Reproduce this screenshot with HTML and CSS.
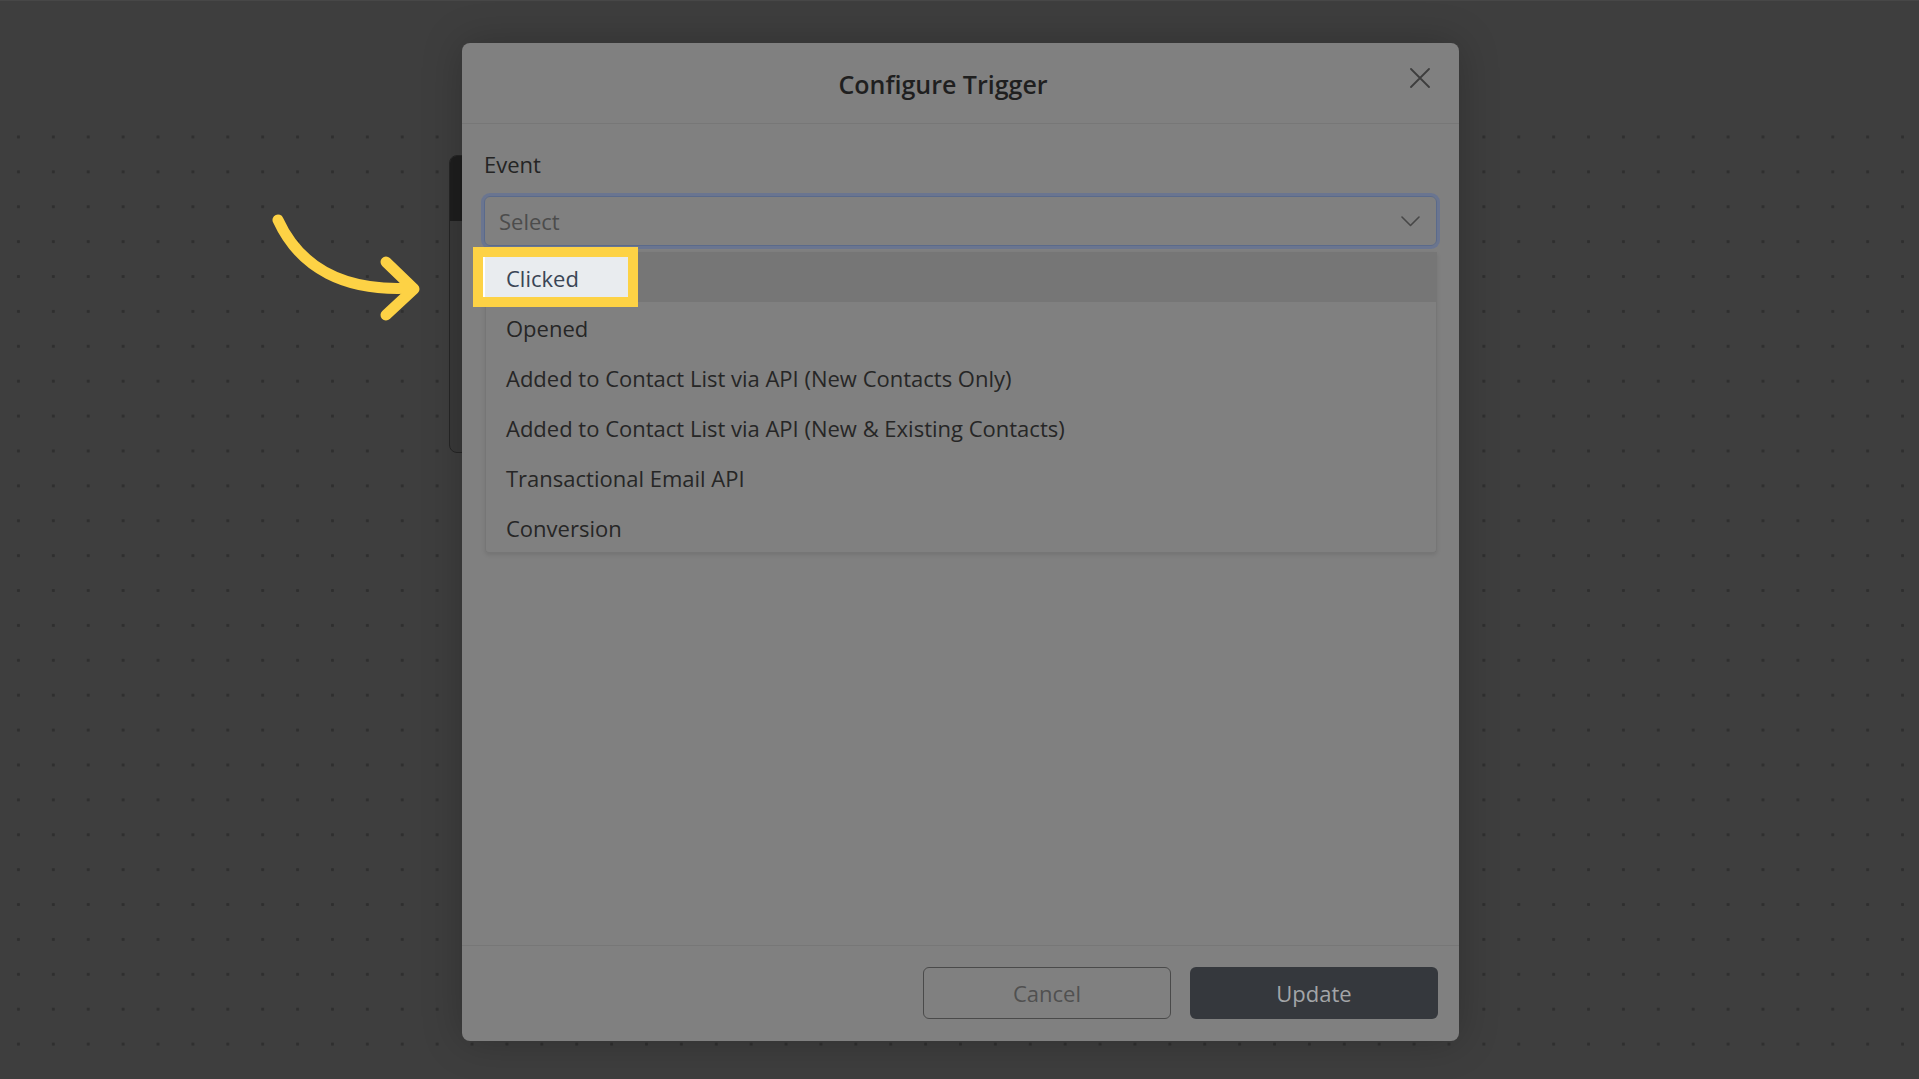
FILE: index.html
```html
<!DOCTYPE html>
<html lang="en">
<head>
    <meta charset="UTF-8">
    <meta name="viewport" content="width=device-width, initial-scale=1.0">
    <title>Configure Trigger</title>
    <link rel="stylesheet" href="styles.css">
</head>
<body>
    <div class="app">
        <div class="topbar"></div>
        <div class="board">
            <!-- workflow node sitting behind the dialog -->
            <div class="node">
                <div class="node-head"></div>
            </div>
        </div>
    </div>

    <div class="modal-layer">
        <div class="modal">
            <div class="modal-header">
                <div class="modal-title">Configure Trigger</div>
                <button class="close-btn" aria-label="Close">
                    <svg width="20" height="20" viewBox="0 0 20 20">
                        <path d="M1 1 L19 19 M19 1 L1 19" stroke="#3d3d3d" stroke-width="1.8" stroke-linecap="round"/>
                    </svg>
                </button>
            </div>

            <div class="modal-body">
                <div class="field-label">Event</div>
                <div class="select">
                    <span class="placeholder">Select</span>
                    <svg width="19" height="11" viewBox="0 0 19 11">
                        <path d="M1 1 L9.5 9.5 L18 1" fill="none" stroke="#474747" stroke-width="1.6" stroke-linecap="round" stroke-linejoin="round"/>
                    </svg>
                </div>
                <ul class="options">
                    <li class="option is-active">Clicked</li>
                    <li class="option">Opened</li>
                    <li class="option">Added to Contact List via API (New Contacts Only)</li>
                    <li class="option">Added to Contact List via API (New &amp; Existing Contacts)</li>
                    <li class="option">Transactional Email API</li>
                    <li class="option">Conversion</li>
                </ul>
            </div>

            <div class="modal-footer">
                <button class="btn btn-outline">Cancel</button>
                <button class="btn btn-dark">Update</button>
            </div>
        </div>
    </div>

    <!-- step callout -->
    <div class="spotlight">Clicked</div>
    <svg class="pointer" width="180" height="130" viewBox="0 0 180 130">
        <path d="M18 20 C40 68, 85 92, 152 88" fill="none" stroke="#fdd245" stroke-width="11" stroke-linecap="round"/>
        <path d="M126 62 L154 89 L126 115" fill="none" stroke="#fdd245" stroke-width="11" stroke-linecap="round" stroke-linejoin="round"/>
    </svg>
</body>
</html>
```

FILE: styles.css
```css
* {
    box-sizing: border-box;
}

html, body {
    margin: 0;
    height: 100%;
}

body {
    font-family: "Open Sans", "Noto Sans", Arial, sans-serif;
    background: #3e3e3e;
    overflow: hidden;
    position: relative;
}

.app {
    height: 1079px;
    display: flex;
    flex-direction: column;
    border-top: 1px solid #474747;
}

.topbar {
    height: 119px;
}

.board {
    flex: 1;
    margin-bottom: 20px;
    position: relative;
    background-image: radial-gradient(circle, #2f2f2f 1.3px, transparent 1.9px);
    background-size: 34.9px 34.9px;
    background-position: 1px -0.5px;
}

.node {
    position: absolute;
    left: 449px;
    top: 35px;
    width: 320px;
    height: 298px;
    background: #393939;
    border: 1px solid #262626;
    border-radius: 8px;
    overflow: hidden;
}

.node-head {
    height: 65px;
    background: #1e1e1e;
}

/* dialog */
.modal-layer {
    position: absolute;
    inset: 0;
    display: flex;
    justify-content: center;
    align-items: flex-start;
    padding-top: 43px;
    padding-left: 2px;
}

.modal {
    width: 997px;
    height: 998px;
    background: #808080;
    border-radius: 8px;
    box-shadow: 0 0 40px rgba(0, 0, 0, 0.22);
    display: flex;
    flex-direction: column;
}

.modal-header {
    height: 81px;
    display: flex;
    align-items: center;
    padding: 2px 22px 0;
    border-bottom: 1px solid #777;
}

.modal-title {
    flex: 1;
    text-align: center;
    font-size: 25px;
    font-weight: 600;
    color: #1f1f1f;
}

.close-btn {
    width: 35px;
    height: 35px;
    padding: 0;
    border: none;
    background: none;
    display: flex;
    align-items: center;
    justify-content: center;
    margin-top: -12px;
}

.modal-body {
    flex: 1;
    padding: 26px 22px 0;
}

.field-label {
    font-size: 22px;
    line-height: 28px;
    color: #242424;
    margin-bottom: 18px;
}

.select {
    height: 50px;
    border: 1px solid #5a6a8b;
    border-radius: 6px;
    box-shadow: 0 0 0 3px #6a7590;
    display: flex;
    align-items: center;
    justify-content: space-between;
    padding: 0 16px 0 14px;
    font-size: 22px;
    color: #4c4c4c;
}

.options {
    list-style: none;
    margin: 6px 0 0 1px;
    padding: 0;
    border: 1px solid #767676;
    border-top: none;
    border-radius: 0 0 4px 4px;
    box-shadow: 0 2px 4px rgba(0, 0, 0, 0.1);
}

.option {
    height: 50px;
    display: flex;
    align-items: center;
    padding: 2px 0 0 20px;
    font-size: 22px;
    color: #262626;
}

.option.is-active {
    background: #767676;
}

.modal-footer {
    border-top: 1px solid #777;
    padding: 21px 21px 22px;
    display: flex;
    justify-content: flex-end;
    gap: 19px;
}

.btn {
    width: 248px;
    height: 52px;
    border-radius: 6px;
    font-family: inherit;
    font-size: 22px;
}

.btn-outline {
    background: transparent;
    border: 1px solid #4a4a4a;
    color: #505050;
}

.btn-dark {
    background: #35383d;
    border: none;
    color: #a3a5a8;
}

/* callout on top of everything */
.spotlight {
    position: absolute;
    left: 473px;
    top: 247px;
    width: 165px;
    height: 60px;
    border: 10px solid #fdd245;
    background: #e9ecef;
    box-shadow: inset 2px 0 #fff;
    display: flex;
    align-items: center;
    padding: 2px 0 0 23px;
    font-size: 22px;
    color: #3a4555;
}

.pointer {
    position: absolute;
    left: 260px;
    top: 200px;
}
```
